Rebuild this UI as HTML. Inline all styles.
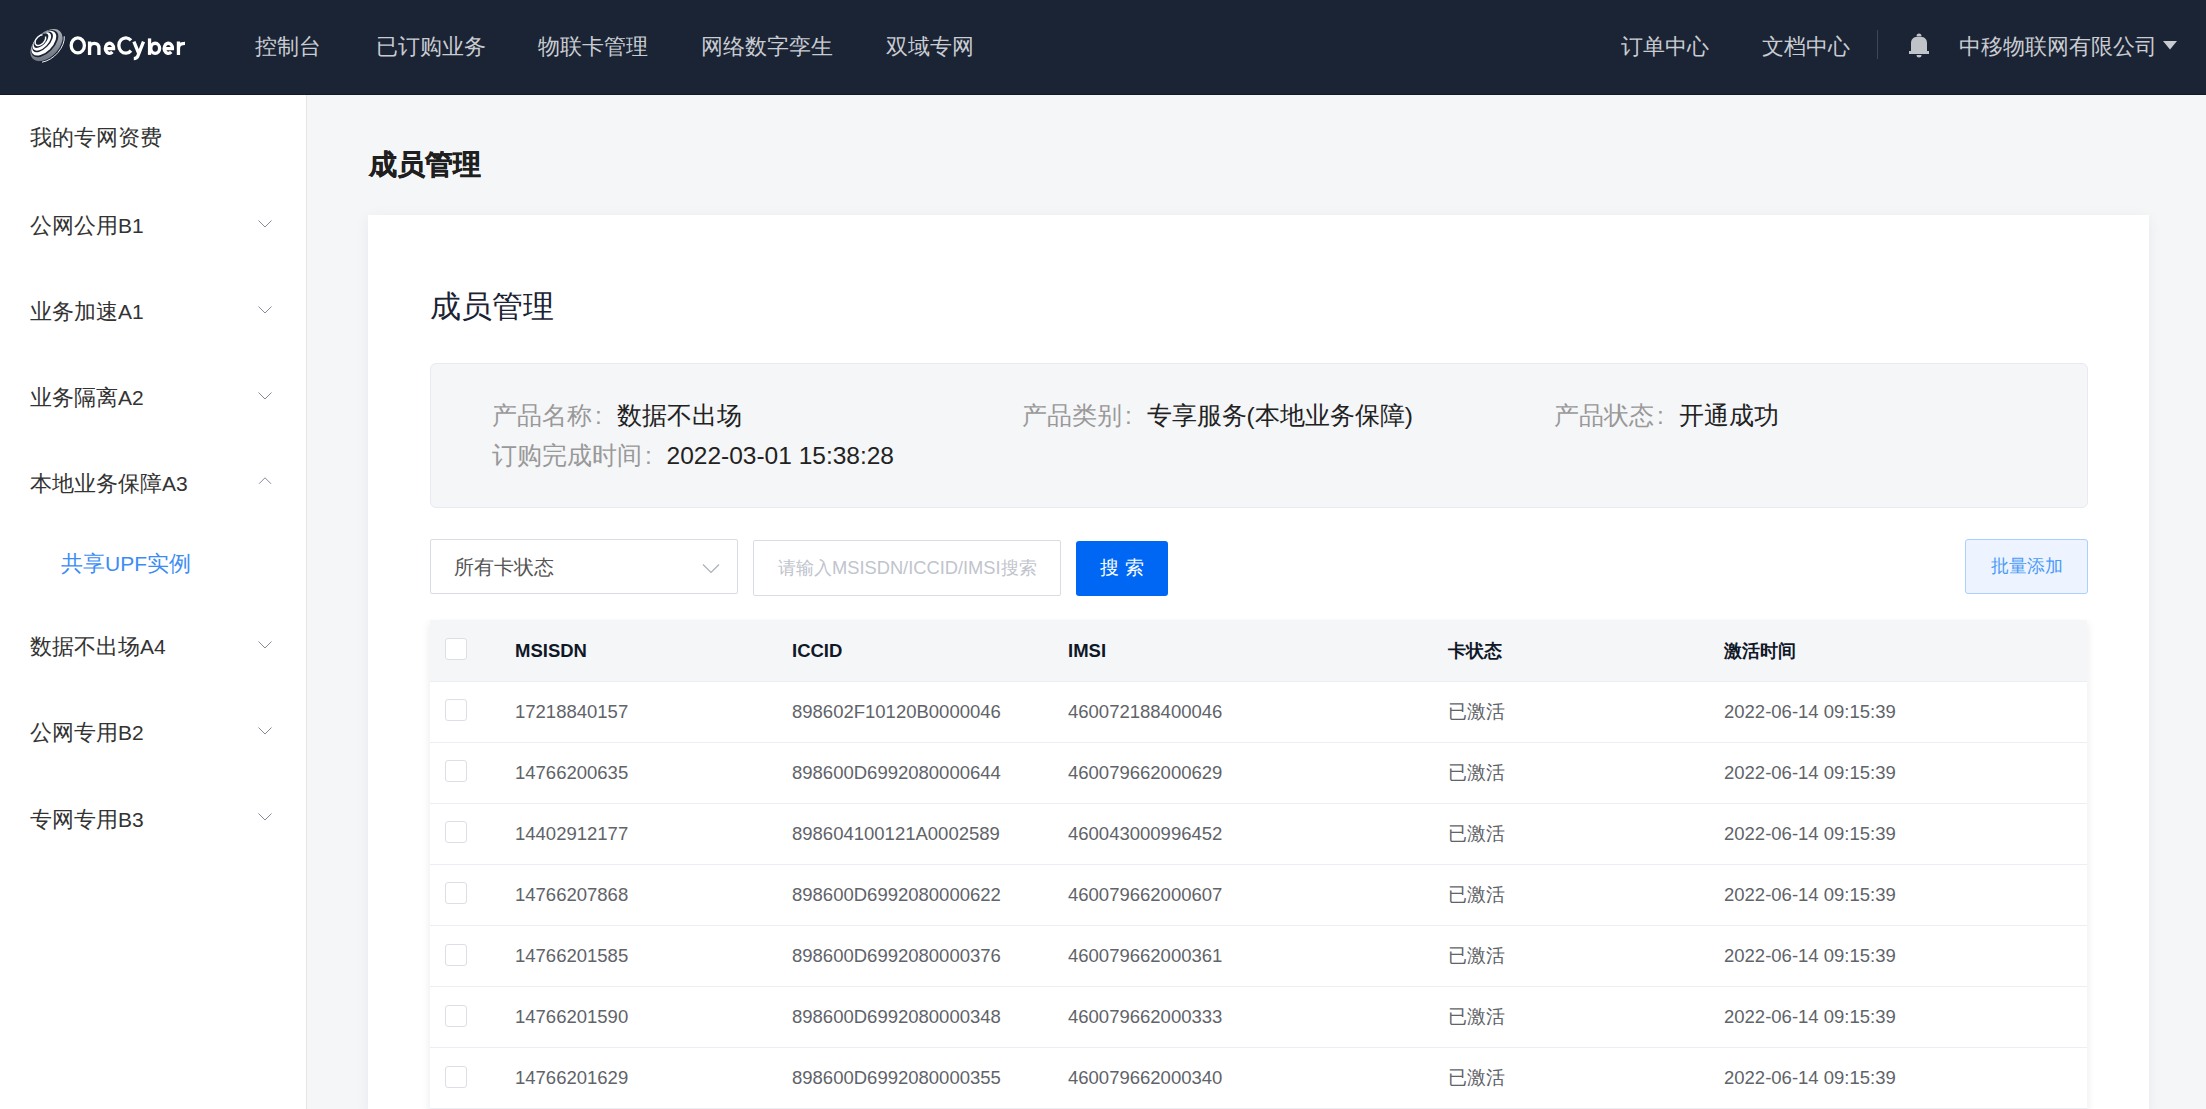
<!DOCTYPE html>
<html><head><meta charset="utf-8">
<style>
*{box-sizing:border-box;margin:0;padding:0}
html,body{width:2206px;height:1109px;overflow:hidden}
body{font-family:"Liberation Sans",sans-serif;background:#f5f6f8;position:relative}
.abs{position:absolute;white-space:nowrap}
#hdr{position:absolute;left:0;top:0;width:2206px;height:95px;background:#1b2435;border-bottom:1px solid #111826}
.nav{position:absolute;top:31px;font-size:22px;line-height:32px;color:#c9ccd1}
#side{position:absolute;left:0;top:95px;width:307px;height:1014px;background:#fff;border-right:1px solid #e5e5e5}
.mi{position:absolute;left:30px;font-size:22px;line-height:30px;color:#333}
.lt{font-size:21px}
.chev{position:absolute;left:258px;width:14px;height:8px}
#card{position:absolute;left:368px;top:215px;width:1781px;height:900px;background:#fff;box-shadow:0 3px 14px rgba(20,30,50,.06)}
.lbl{color:#999}
.co{display:inline-block;width:1em;padding-left:3px}
.val{color:#222}
.th{position:absolute;font-size:18.5px;font-weight:bold;color:#101828;line-height:24px}
.td{position:absolute;font-size:18.5px;color:#606369;line-height:24px}
.cb{position:absolute;left:445px;width:22px;height:22px;border:1px solid #dcdfe6;border-radius:3px;background:#fff}
.rowline{position:absolute;left:430px;width:1657px;height:1px;background:#ebeef3}
</style></head><body>
<div id="hdr">
  <svg class="abs" style="left:25px;top:24px" width="44" height="44" viewBox="0 0 44 44">
    <defs><linearGradient id="g1" x1="0" y1="1" x2="1" y2="0"><stop offset="0" stop-color="#5f6673"/><stop offset="0.6" stop-color="#9ca1a9"/><stop offset="1" stop-color="#c3c6cb"/></linearGradient></defs>
    <g transform="translate(22.1,21.3) rotate(-45) scale(0.97)">
      <ellipse cx="-0.3" cy="-0.6" rx="20" ry="12.3" fill="url(#g1)"/>
      <path d="M18.9 5.2 A20.9 13.1 0 0 1 -18.1 6.5" fill="none" stroke="#1b2435" stroke-width="1.2"/>
      <path d="M19.1 5.9 A21.3 13.5 0 0 1 -16 8.6" fill="none" stroke="#fff" stroke-width="0.9"/>
      <ellipse cx="-0.5" cy="-3.0" rx="17.4" ry="9.6" fill="#1b2435"/>
      <ellipse cx="-0.8" cy="-4.0" rx="15.8" ry="8.8" fill="#fff"/>
      <ellipse cx="-0.8" cy="-5.8" rx="13.4" ry="6.9" fill="#1b2435"/>
      <ellipse cx="-1" cy="-6.5" rx="11.8" ry="6.3" fill="#fff"/>
      <ellipse cx="-1" cy="-7.9" rx="9.6" ry="4.9" fill="#1b2435"/>
      <path d="M5.2 -7.5 A6.6 4.1 0 1 1 4.3 -11.0" fill="none" stroke="#fff" stroke-width="1.5"/>
    </g>
  </svg>
  <svg class="abs" style="left:60px;top:28px" width="140" height="38" viewBox="0 0 140 38"><g fill="none" stroke="#fff" stroke-width="3.3">
<ellipse cx="17.8" cy="17.4" rx="6.6" ry="7.55"/>
<path d="M29.55 26.9 V13.6 M29.55 20.5 C29.55 17 31.5 15.4 34.2 15.4 C37.2 15.4 38.95 17.2 38.95 20.5 V26.9"/>
<path d="M45.3 20.6 H53.6 A4.1 5.05 0 1 0 52.4 23.9"/>
<path d="M71.0 12.4 A6.95 7.7 0 1 0 71.0 22.6"/>
<path d="M73.9 13.6 L79.2 26.5 M83.5 13.6 L77.8 28.2 C77 30.2 76 30.6 73.8 30.6"/>
<path d="M89.55 10.4 V26.9"/><ellipse cx="95.2" cy="20.3" rx="4.4" ry="5.05"/>
<path d="M104.1 20.6 H112.4 A4.1 5.05 0 1 0 111.2 23.9"/>
<path d="M118.45 26.9 V13.6 M118.45 20 C118.45 16.8 120.5 15.3 125 15.3"/>
</g></svg>
  <div class="nav abs" style="left:255px">控制台</div>
  <div class="nav abs" style="left:376px">已订购业务</div>
  <div class="nav abs" style="left:538px">物联卡管理</div>
  <div class="nav abs" style="left:701px">网络数字孪生</div>
  <div class="nav abs" style="left:886px">双域专网</div>
  <div class="nav abs" style="left:1621px">订单中心</div>
  <div class="nav abs" style="left:1762px">文档中心</div>
  <div class="abs" style="left:1877px;top:30px;width:1px;height:29px;background:#3e4756"></div>
  <svg class="abs" style="left:1908px;top:32px" width="22" height="27" viewBox="0 0 22 27">
    <path d="M8.5 4 A2.5 2.5 0 0 1 13.5 4 Z" fill="#c0c3c8"/>
    <path d="M3 19 L3 11 C3 6.5 6.5 4.5 11 4.5 C15.5 4.5 19 6.5 19 11 L19 19 Z" fill="#c0c3c8"/>
    <rect x="1" y="19" width="20" height="3" fill="#c0c3c8"/>
    <path d="M8.5 23 A2.5 2.5 0 0 0 13.5 23 Z" fill="#c0c3c8"/>
  </svg>
  <div class="nav abs" style="left:1959px">中移物联网有限公司</div>
  <svg class="abs" style="left:2163px;top:41px" width="14" height="9" viewBox="0 0 14 9"><path d="M0 0 L14 0 L7 8.5 Z" fill="#c8cbd0"/></svg>
</div>

<div id="side">
  <div class="mi" style="top:28px">我的专网资费</div>
  <div class="mi" style="top:116px">公网公用<span class="lt">B1</span></div>
  <svg class="chev" style="top:125px" viewBox="0 0 14 8"><path d="M0.5 0.5 L7 7 L13.5 0.5" fill="none" stroke="#868b9b" stroke-width="1"/></svg>
  <div class="mi" style="top:202px">业务加速<span class="lt">A1</span></div>
  <svg class="chev" style="top:211px" viewBox="0 0 14 8"><path d="M0.5 0.5 L7 7 L13.5 0.5" fill="none" stroke="#868b9b" stroke-width="1"/></svg>
  <div class="mi" style="top:288px">业务隔离<span class="lt">A2</span></div>
  <svg class="chev" style="top:297px" viewBox="0 0 14 8"><path d="M0.5 0.5 L7 7 L13.5 0.5" fill="none" stroke="#868b9b" stroke-width="1"/></svg>
  <div class="mi" style="top:374px">本地业务保障<span class="lt">A3</span></div>
  <svg class="chev" style="top:382px" viewBox="0 0 14 8"><path d="M1 6.8 L7 0.8 L13 6.8" fill="none" stroke="#868b9b" stroke-width="1"/></svg>
  <div class="mi" style="left:61px;top:454px;color:#3b8cf5">共享<span class="lt">UPF</span>实例</div>
  <div class="mi" style="top:537px">数据不出场<span class="lt">A4</span></div>
  <svg class="chev" style="top:546px" viewBox="0 0 14 8"><path d="M0.5 0.5 L7 7 L13.5 0.5" fill="none" stroke="#868b9b" stroke-width="1"/></svg>
  <div class="mi" style="top:623px">公网专用<span class="lt">B2</span></div>
  <svg class="chev" style="top:632px" viewBox="0 0 14 8"><path d="M0.5 0.5 L7 7 L13.5 0.5" fill="none" stroke="#868b9b" stroke-width="1"/></svg>
  <div class="mi" style="top:710px">专网专用<span class="lt">B3</span></div>
  <svg class="chev" style="top:718px" viewBox="0 0 14 8"><path d="M0.5 0.5 L7 7 L13.5 0.5" fill="none" stroke="#868b9b" stroke-width="1"/></svg>
</div>

<div class="abs" style="left:369px;top:147px;font-size:28px;line-height:36px;font-weight:bold;color:#1f1f1f;-webkit-text-stroke:0.4px #1f1f1f">成员管理</div>

<div id="card"></div>
<div class="abs" style="left:430px;top:287px;font-size:31px;line-height:40px;color:#1a2233">成员管理</div>

<div class="abs" style="left:430px;top:363px;width:1658px;height:145px;background:#f5f6f8;border:1px solid #e7eaf1;border-radius:6px"></div>
<div class="abs" style="left:492px;top:396px;font-size:24.5px;line-height:40px"><span class="lbl">产品名称<span class="co">:</span></span><span class="val">数据不出场</span></div>
<div class="abs" style="left:1022px;top:396px;font-size:24.5px;line-height:40px"><span class="lbl">产品类别<span class="co">:</span></span><span class="val">专享服务(本地业务保障)</span></div>
<div class="abs" style="left:1554px;top:396px;font-size:24.5px;line-height:40px"><span class="lbl">产品状态<span class="co">:</span></span><span class="val">开通成功</span></div>
<div class="abs" style="left:492px;top:436px;font-size:24.5px;line-height:40px"><span class="lbl">订购完成时间<span class="co">:</span></span><span class="val">2022-03-01 15:38:28</span></div>

<div class="abs" style="left:430px;top:539px;width:308px;height:55px;border:1px solid #d9dde3;border-radius:2px;background:#fff"></div>
<div class="abs" style="left:454px;top:552px;font-size:20px;line-height:30px;color:#555">所有卡状态</div>
<svg class="abs" style="left:702px;top:563px" width="18" height="11" viewBox="0 0 18 11"><path d="M1 1.5 L9 9.5 L17 1.5" fill="none" stroke="#aab0ba" stroke-width="1.2"/></svg>

<div class="abs" style="left:753px;top:540px;width:308px;height:56px;border:1px solid #d9dde3;border-radius:2px;background:#fff"></div>
<div class="abs" style="left:778px;top:554px;font-size:18.3px;line-height:28px;color:#c0c4cc">请输入MSISDN/ICCID/IMSI搜索</div>

<div class="abs" style="left:1076px;top:541px;width:92px;height:55px;background:#0067f4;border-radius:3px;color:#fff;font-size:19px;line-height:53px;text-align:center">搜 索</div>

<div class="abs" style="left:1965px;top:539px;width:123px;height:55px;background:#edf4ff;border:1px solid #a9d0ff;border-radius:3px;color:#4a9af8;font-size:18.4px;line-height:51px;text-align:center">批量添加</div>

<div class="abs" style="left:430px;top:620px;width:1657px;height:520px;background:#fff;box-shadow:5px 0 7px -3px rgba(0,0,0,.06),-5px 0 7px -3px rgba(0,0,0,.06)"></div>
<div class="abs" style="left:430px;top:620px;width:1657px;height:61px;background:#f5f6f8"></div>
<div class="rowline" style="top:681px"></div>
<div class="cb" style="top:638px"></div>
<div class="th" style="left:515px;top:639px">MSISDN</div>
<div class="th" style="left:792px;top:639px">ICCID</div>
<div class="th" style="left:1068px;top:639px">IMSI</div>
<div class="th" style="left:1448px;top:639px"><span style="font-size:18px">卡状态</span></div>
<div class="th" style="left:1724px;top:639px"><span style="font-size:18px">激活时间</span></div>

<div class="cb" style="top:699px"></div>
<div class="td" style="left:515px;top:700px">17218840157</div>
<div class="td" style="left:792px;top:700px">898602F10120B0000046</div>
<div class="td" style="left:1068px;top:700px">460072188400046</div>
<div class="td" style="left:1448px;top:700px">已激活</div>
<div class="td" style="left:1724px;top:700px">2022-06-14 09:15:39</div>
<div class="rowline" style="top:742px"></div>
<div class="cb" style="top:760px"></div>
<div class="td" style="left:515px;top:761px">14766200635</div>
<div class="td" style="left:792px;top:761px">898600D6992080000644</div>
<div class="td" style="left:1068px;top:761px">460079662000629</div>
<div class="td" style="left:1448px;top:761px">已激活</div>
<div class="td" style="left:1724px;top:761px">2022-06-14 09:15:39</div>
<div class="rowline" style="top:803px"></div>
<div class="cb" style="top:821px"></div>
<div class="td" style="left:515px;top:822px">14402912177</div>
<div class="td" style="left:792px;top:822px">898604100121A0002589</div>
<div class="td" style="left:1068px;top:822px">460043000996452</div>
<div class="td" style="left:1448px;top:822px">已激活</div>
<div class="td" style="left:1724px;top:822px">2022-06-14 09:15:39</div>
<div class="rowline" style="top:864px"></div>
<div class="cb" style="top:882px"></div>
<div class="td" style="left:515px;top:883px">14766207868</div>
<div class="td" style="left:792px;top:883px">898600D6992080000622</div>
<div class="td" style="left:1068px;top:883px">460079662000607</div>
<div class="td" style="left:1448px;top:883px">已激活</div>
<div class="td" style="left:1724px;top:883px">2022-06-14 09:15:39</div>
<div class="rowline" style="top:925px"></div>
<div class="cb" style="top:944px"></div>
<div class="td" style="left:515px;top:944px">14766201585</div>
<div class="td" style="left:792px;top:944px">898600D6992080000376</div>
<div class="td" style="left:1068px;top:944px">460079662000361</div>
<div class="td" style="left:1448px;top:944px">已激活</div>
<div class="td" style="left:1724px;top:944px">2022-06-14 09:15:39</div>
<div class="rowline" style="top:986px"></div>
<div class="cb" style="top:1005px"></div>
<div class="td" style="left:515px;top:1005px">14766201590</div>
<div class="td" style="left:792px;top:1005px">898600D6992080000348</div>
<div class="td" style="left:1068px;top:1005px">460079662000333</div>
<div class="td" style="left:1448px;top:1005px">已激活</div>
<div class="td" style="left:1724px;top:1005px">2022-06-14 09:15:39</div>
<div class="rowline" style="top:1047px"></div>
<div class="cb" style="top:1066px"></div>
<div class="td" style="left:515px;top:1066px">14766201629</div>
<div class="td" style="left:792px;top:1066px">898600D6992080000355</div>
<div class="td" style="left:1068px;top:1066px">460079662000340</div>
<div class="td" style="left:1448px;top:1066px">已激活</div>
<div class="td" style="left:1724px;top:1066px">2022-06-14 09:15:39</div>
<div class="rowline" style="top:1108px"></div>

</body></html>
